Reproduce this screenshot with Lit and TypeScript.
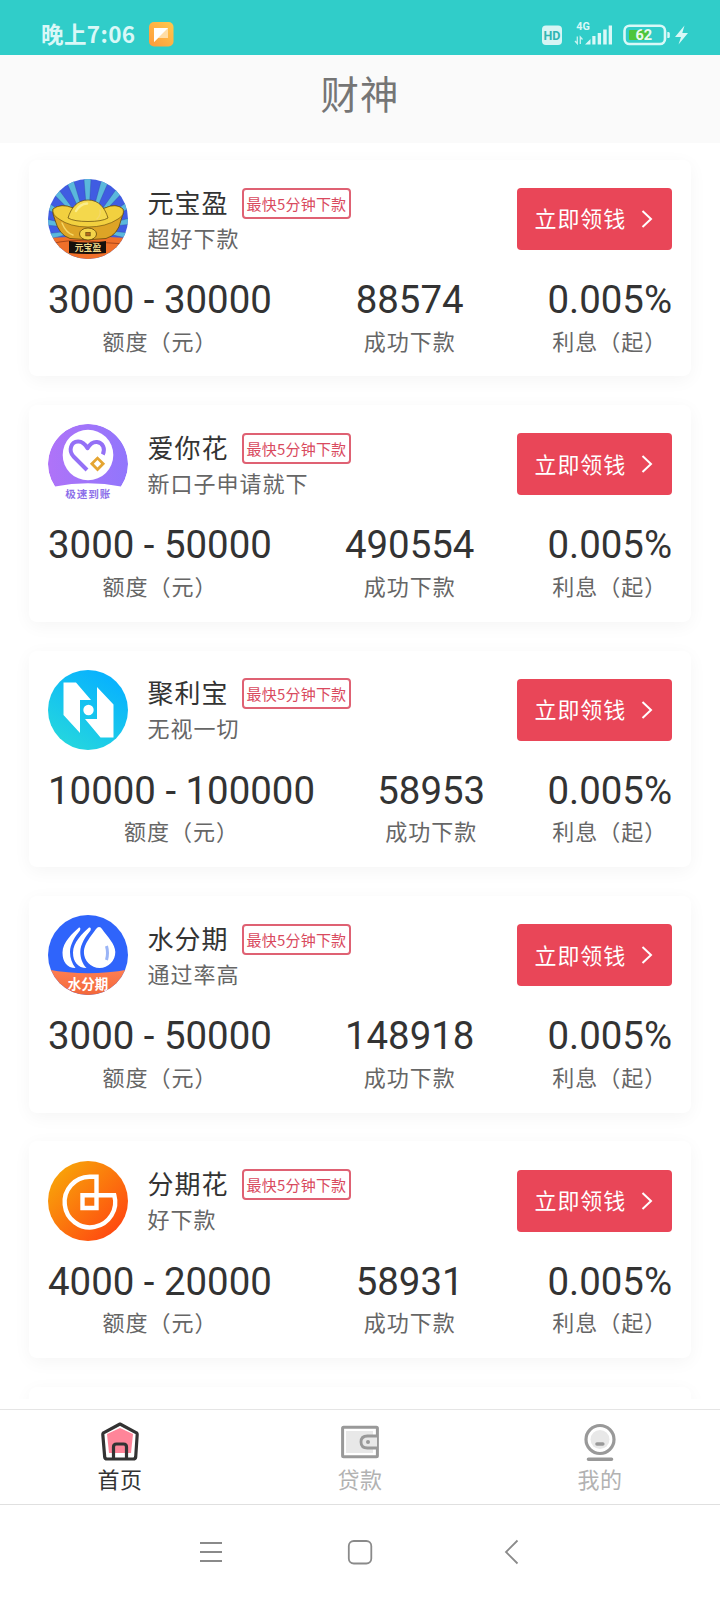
/**
 * Loan product list screen (Lit + TypeScript)
 *
 * @element app-root
 */

import { LitElement, html, css, svg, nothing } from 'lit';
import type { TemplateResult } from 'lit';
import { customElement, property } from 'lit/decorators.js';
import { classMap } from 'lit/directives/class-map.js';

type LogoName = 'ingot' | 'heart' | 'blocks' | 'drops' | 'spiral';

interface Product {
  name: string;
  slogan: string;
  logo: LogoName;
  range: string;
  count: string;
  rate: string;
}

const PRODUCTS: Product[] = [
  { name: '元宝盈', slogan: '超好下款', logo: 'ingot', range: '3000 - 30000', count: '88574', rate: '0.005%' },
  { name: '爱你花', slogan: '新口子申请就下', logo: 'heart', range: '3000 - 50000', count: '490554', rate: '0.005%' },
  { name: '聚利宝', slogan: '无视一切', logo: 'blocks', range: '10000 - 100000', count: '58953', rate: '0.005%' },
  { name: '水分期', slogan: '通过率高', logo: 'drops', range: '3000 - 50000', count: '148918', rate: '0.005%' },
  { name: '分期花', slogan: '好下款', logo: 'spiral', range: '4000 - 20000', count: '58931', rate: '0.005%' },
];

/* Rays behind the ingot, as wedges from the centre */
const RAY_COUNT = 18;
const rays = Array.from({ length: RAY_COUNT }, (_, i) => {
  const a = (i * 2 * Math.PI) / RAY_COUNT - Math.PI / 2 - 0.08;
  const b = a + 0.14;
  const p = (t: number) => `${(40 + 72 * Math.cos(t)).toFixed(1)} ${(50 + 72 * Math.sin(t)).toFixed(1)}`;
  return `M40 50L${p(a)}L${p(b)}Z`;
}).join('');

const LOGOS: Record<LogoName, TemplateResult> = {
  ingot: svg`
    <rect width="80" height="80" fill="#405ce2" />
    <path d=${rays} fill="#5ab8dc" stroke="#2c3f8f" stroke-width=".3" />
    <path d="M0 59Q40 56 80 59V80H0Z" fill="#f0702a" />
    <path d="M2 65Q22 60 40 62T78 65" fill="none" stroke="#8d3512" stroke-width=".7" />
    <path d="M5 30Q13 24 25 29Q40 40 57 29Q68 24 75 30Q76 34 73 41Q70 56 58 59.500Q40 62 22 59.500Q11 56 7 41Q4 34 5 30Z" fill="#dda426" stroke="#5f450c" stroke-width=".8" />
    <path d="M5 30Q13 24 25 29Q40 36 57 29Q68 24 75 30Q77 36 70 40Q58 48 40 48Q22 48 11 40Q4 36 5 30Z" fill="#f2d03f" stroke="#5f450c" stroke-width=".6" />
    <path d="M20 39C23 29 29 21 40 21S57 29 60 39Q54 42.500 40 42.500T20 39Z" fill="#f4d84c" stroke="#5f450c" stroke-width=".7" />
    <path d="M28 32Q32 25 39 24.500" fill="none" stroke="#faec8c" stroke-width="2.500" stroke-linecap="round" />
    <path d="M52 31Q53 36 49 40M14 44Q18 54 25 56" fill="none" stroke="#f5d868" stroke-width="1.400" stroke-linecap="round" />
    <ellipse cx="40" cy="55" rx="8.500" ry="6" fill="#f4d44a" stroke="#5f450c" stroke-width=".8" />
    <rect x="37.800" y="53.300" width="4.400" height="3.600" fill="#b5691b" stroke="#5f450c" stroke-width=".6" />
    <path d="M21 62Q40 65 58 62V74Q40 76 21 74Z" fill="#16100c" />
    <text x="40" y="72.200" font-size="8.800" font-weight="700" text-anchor="middle" fill="#f0d98a">元宝盈</text>
  `,
  heart: svg`
    <defs>
      <linearGradient id="heart-bg" x1="0" y1="0" x2="1" y2="0">
        <stop offset="0" stop-color="#af73f8" />
        <stop offset="1" stop-color="#9176fc" />
      </linearGradient>
    </defs>
    <path d="M7 62.500A40 40 0 1 1 73 62.500Q40 56 7 62.500Z" fill="url(#heart-bg)" />
    <circle cx="40" cy="31" r="25.300" fill="#fff" />
    <path d="M39 46L25.500 32.500C20 26 23 18 30 17.600C34 17.400 37 20 39.500 24.200C42 20 45 17.600 49 18C55 18.600 57.500 25 54.800 30.500" fill="none" stroke="#9470f6" stroke-width="4" stroke-linejoin="round" />
    <rect x="45.500" y="35.800" width="8" height="8" transform="rotate(45 49.5 39.8)" fill="#fff" stroke="#e5a532" stroke-width="2.800" />
    <text x="40.300" y="73.500" font-size="10.600" font-weight="700" letter-spacing=".9" text-anchor="middle" fill="#8d70ea">极速到账</text>
  `,
  blocks: svg`
    <defs>
      <linearGradient id="blocks-bg" x1=".8" y1="0" x2=".2" y2="1">
        <stop offset=".1" stop-color="#09b3fd" />
        <stop offset="1" stop-color="#26d8dd" />
      </linearGradient>
    </defs>
    <rect width="80" height="80" fill="url(#blocks-bg)" />
    <path d="M15.500 12.500H28L43 30H32V63L15.500 45Z" fill="#fff" />
    <path d="M49 17L65.500 34.500V67.500H52.500L37 49H49Z" fill="#fff" />
    <circle cx="40.500" cy="40" r="5.200" fill="#fff" />
  `,
  drops: svg`
    <defs>
      <linearGradient id="drops-foot" x1="0" y1="0" x2="0" y2="1">
        <stop offset="0" stop-color="#ff7f52" />
        <stop offset="1" stop-color="#f2673a" />
      </linearGradient>
    </defs>
    <rect width="80" height="80" fill="#2f64fb" />
    <path d="M0 54.500Q40 62 80 54.500V80H0Z" fill="url(#drops-foot)" />
    <path d="M51 12Q53 12 54 14C59 21 67.300 29 67.300 37A15.700 16 0 0 1 35.900 37C35.900 29 43 21 48 14Q49.500 12 51 12Z" fill="#fff" />
    <path d="M31 12.500C25 18 14.500 27 14.500 37.500C14.500 47 19 53 27.500 53C24 48.500 22 43 22 37C22 29 27.500 21 32 15.500Q33 12 31 12.500Z" fill="#fff" />
    <path d="M41 12.500C35 18 25 27 25 37.500C25 47 30 53 38.500 53C34.500 49 32.300 43 32.300 37C32.300 29 38 21 42.500 15.500Q43.500 12 41 12.500Z" fill="#fff" />
    <path d="M58.500 31Q60.500 38 58.500 45" fill="none" stroke="#9ab4f6" stroke-width="3" />
    <text x="40" y="74.300" font-size="13.500" font-weight="700" text-anchor="middle" fill="#fff">水分期</text>
  `,
  spiral: svg`
    <defs>
      <linearGradient id="spiral-bg" x1=".1" y1=".1" x2=".9" y2=".9">
        <stop offset="0" stop-color="#f8a509" />
        <stop offset="1" stop-color="#ff4611" />
      </linearGradient>
    </defs>
    <rect width="80" height="80" fill="url(#spiral-bg)" />
    <path d="M48.500 47V15.800H41.500A25.300 25.300 0 1 0 66.300 34.300H34.500V47Z" fill="none" stroke="#fff" stroke-width="4.400" />
  `,
};

const TAB_ICONS: Record<string, TemplateResult> = {
  home: svg`
    <path d="M7 13L20 7L33 13L31 32H9Z" fill="#ff8599" />
    <path d="M20 3L36.500 11.800Q37.300 12.500 37.200 13.500L35.700 36Q35.500 38 33 38H7.200Q4.900 38 4.700 36L2.800 13.500Q2.700 12.500 3.500 11.800Z" fill="none" stroke="#333" stroke-width="3.200" stroke-linejoin="round" />
    <path d="M13.500 37.500V26Q13.500 23 16.500 23H23.500Q26.500 23 26.500 26V37.500" fill="none" stroke="#333" stroke-width="3.200" />
  `,
  wallet: svg`
    <rect x="6" y="10" width="27" height="22" fill="#e8e8e8" />
    <rect x="2.600" y="6.200" width="34.800" height="29.600" rx="1" fill="none" stroke="#999" stroke-width="3" />
    <path d="M37 15H27.500Q21 15 21 21T27.500 27H37" fill="#e8e8e8" stroke="#999" stroke-width="2.800" />
    <circle cx="28" cy="21" r="2" fill="#999" />
  `,
  mine: svg`
    <circle cx="20" cy="18.500" r="9.500" fill="#e8e8e8" />
    <circle cx="20" cy="18.500" r="14" fill="none" stroke="#999" stroke-width="3.200" />
    <path d="M17 23H22.800M8.500 38.200H31.500" stroke="#999" stroke-width="3.600" stroke-linecap="round" />
  `,
};

@customElement('loan-status-bar')
export class LoanStatusBar extends LitElement {
  static override styles = css`
    :host {
      box-sizing: border-box;
      display: flex;
      align-items: center;
      height: 55px;
      padding: 13px 32px 0 41px;
      background: #30cdc9;
      color: #d9f8f7;
    }

    .time {
      height: 30px;
      font: 700 22.5px/29px 'Noto Sans CJK SC', sans-serif;
      letter-spacing: 0.4px;
    }

    .app {
      width: 25px;
      height: 25px;
      margin-left: 13px;
    }

    .signals {
      width: 148px;
      height: 30px;
      margin-left: auto;
    }
  `;

  override render() {
    return html`
      <span class="time">晚上7:06</span>
      <svg class="app" viewBox="0 0 25 25">
        <defs>
          <linearGradient id="app-bg" x1="0" y1="1" x2="1" y2="0">
            <stop offset="0" stop-color="#ff9a3c" />
            <stop offset="1" stop-color="#ffc94c" />
          </linearGradient>
        </defs>
        <rect width="24.500" height="24.500" rx="5" fill="url(#app-bg)" />
        <path d="M5 6H19V16H9L5 20Z" fill="#ffdda6" />
        <path d="M5 6H19L5 20Z" fill="#fff" />
      </svg>
      <svg class="signals" viewBox="540 19 148 30" font-family="Roboto, sans-serif" font-weight="700">
        <rect x="542" y="25.500" width="20" height="19.500" rx="4" fill="#d6f5f4" />
        <text x="552" y="39.900" font-size="12.500" text-anchor="middle" fill="#30b5b2">HD</text>
        <text x="576.300" y="30.300" font-size="10.800" fill="#d9f8f7">4G</text>
        <path d="M577.300 36.500V43.500L575 41M580.300 44V37L582.500 39.500" fill="none" stroke="#c9f3f1" stroke-width="1.300" />
        <path d="M585 44.500L590.500 39V44.500ZM592.300 36H595.500V44.500H592.300ZM597.700 33H601V44.500H597.700ZM603.200 29.500H606.700V44.500H603.200ZM608.700 25.500H612V44.500H608.700Z" fill="#d9f8f7" />
        <rect x="624.500" y="25.800" width="40.500" height="18.200" rx="5" fill="none" stroke="#d9f8f7" stroke-width="2.600" />
        <rect x="629" y="30" width="20" height="10" rx="1" fill="#4fc53c" />
        <path d="M667.300 32H668.500Q669.800 32 669.800 33.500V36.500Q669.800 38 668.500 38H667.300Z" fill="#d9f8f7" />
        <text x="643.700" y="40" font-size="14.500" text-anchor="middle" fill="#e9fbf0">62</text>
        <path d="M684.500 25.500L675 37H681L678.500 44.500L688 33H682.300Z" fill="#d9f8f7" />
      </svg>
    `;
  }
}

@customElement('loan-card')
export class LoanCard extends LitElement {
  static override styles = css`
    :host {
      box-sizing: border-box;
      display: block;
      flex: none;
      height: 216.6px;
      padding: 19.2px;
      border-radius: 8px;
      background: #fff;
      box-shadow: 0 4px 18px rgba(0, 0, 0, 0.045);
      color: #333;
    }

    .head {
      display: flex;
      height: 80px;
    }

    .logo {
      flex: none;
      width: 80px;
      height: 80px;
      border-radius: 50%;
    }

    .info {
      flex: 1;
      padding: 8.6px 0 0 19.6px;
    }

    .title {
      display: flex;
      align-items: flex-start;
      height: 34px;
    }

    .name {
      font-size: 26px;
      line-height: 28px;
      letter-spacing: 1px;
    }

    .tag {
      box-sizing: border-box;
      height: 31px;
      margin-left: 13px;
      padding: 0 2.5px 0 3px;
      border: 2px solid #df6173;
      border-radius: 4px;
      color: #d94a5e;
      font-size: 15px;
      letter-spacing: 0.2px;
      line-height: 27px;
    }

    .slogan {
      color: #666;
      font-size: 22px;
      line-height: 30px;
      letter-spacing: 1px;
    }

    .apply {
      appearance: none;
      box-sizing: border-box;
      display: flex;
      align-items: center;
      align-self: center;
      width: 155px;
      height: 62px;
      margin: 0;
      padding: 0 18px 0 17.5px;
      border: none;
      border-radius: 4px;
      background: #e94658;
      color: #fff;
      font: inherit;
      font-size: 22px;
      letter-spacing: 0.9px;
      white-space: nowrap;
    }

    .apply span {
      padding-bottom: 3px;
    }

    .apply svg {
      width: 12px;
      height: 20px;
      margin-left: 15px;
    }

    .stats {
      display: flex;
      justify-content: space-between;
      margin-top: 18px;
      text-align: center;
    }

    .value {
      font-family: Roboto, sans-serif;
      font-size: 38.4px;
      line-height: 45px;
    }

    .label {
      margin-top: 4.6px;
      color: #666;
      font-size: 22px;
      line-height: 26px;
      letter-spacing: 1px;
    }
  `;

  @property({ attribute: false })
  product?: Product;

  private _renderStat(value: string, label: string) {
    return html`
      <div class="stat">
        <div class="value">${value}</div>
        <div class="label">${label}</div>
      </div>
    `;
  }

  override render() {
    if (!this.product) return nothing;
    const { name, slogan, logo, range, count, rate } = this.product;
    return html`
      <div class="head">
        <svg class="logo" viewBox="0 0 80 80">${LOGOS[logo]}</svg>
        <div class="info">
          <div class="title">
            <span class="name">${name}</span>
            <span class="tag">最快5分钟下款</span>
          </div>
          <div class="slogan">${slogan}</div>
        </div>
        <button class="apply" type="button">
          <span>立即领钱</span>
          <svg viewBox="0 0 12 20">
            <path d="M1.500 2L10 10L1.500 18" fill="none" stroke="#fff" stroke-width="2" />
          </svg>
        </button>
      </div>
      <div class="stats">
        ${this._renderStat(range, '额度（元）')}
        ${this._renderStat(count, '成功下款')}
        ${this._renderStat(rate, '利息（起）')}
      </div>
    `;
  }
}

@customElement('loan-tab')
export class LoanTab extends LitElement {
  static override styles = css`
    :host {
      display: block;
      flex: 1;
    }

    .tab {
      display: flex;
      flex-direction: column;
      align-items: center;
      padding-top: 11px;
      color: #b2b2b2;
      font-size: 22px;
      line-height: 30px;
      letter-spacing: 0.6px;
    }

    .tab.active {
      color: #333;
    }

    .tab svg {
      width: 40px;
      height: 42px;
    }
  `;

  @property({ type: String })
  icon = 'home';

  @property({ type: String })
  label = '';

  @property({ type: Boolean, reflect: true })
  active = false;

  override render() {
    return html`
      <div class=${classMap({ tab: true, active: this.active })}>
        <svg viewBox="0 0 40 42">${TAB_ICONS[this.icon]}</svg>
        <span>${this.label}</span>
      </div>
    `;
  }
}

@customElement('app-root')
export class AppRoot extends LitElement {
  static override styles = css`
    :host {
      display: flex;
      flex-direction: column;
      width: 720px;
      height: 1600px;
      overflow: hidden;
      background: #fff;
      font-family: 'Noto Sans CJK SC', sans-serif;
    }

    .header {
      flex: none;
      height: 88px;
      background: #fafafa;
      color: #757575;
      font-size: 38.4px;
      line-height: 75px;
      letter-spacing: 1px;
      text-align: center;
    }

    .list {
      box-sizing: border-box;
      display: flex;
      flex-direction: column;
      gap: 28.8px;
      height: 1256px;
      padding: 16.8px 28.8px 0;
      overflow: hidden;
    }

    .tabs {
      box-sizing: border-box;
      display: flex;
      height: 96px;
      margin-top: 10px;
      border-top: 1px solid #e5e5e5;
      border-bottom: 1px solid #e0e0e0;
    }

    .system {
      display: flex;
      flex: 1;
      align-items: center;
      justify-content: center;
      padding-bottom: 2px;
    }

    .system svg {
      width: 320px;
      height: 28px;
    }
  `;

  override render() {
    return html`
      <loan-status-bar></loan-status-bar>
      <div class="header">财神</div>
      <main class="list">
        ${PRODUCTS.map((product) => html`<loan-card .product=${product}></loan-card>`)}
        <loan-card></loan-card>
      </main>
      <nav class="tabs">
        <loan-tab icon="home" label="首页" active></loan-tab>
        <loan-tab icon="wallet" label="贷款"></loan-tab>
        <loan-tab icon="mine" label="我的"></loan-tab>
      </nav>
      <div class="system">
        <svg viewBox="200 0 320 28" fill="none" stroke="#8a8a8a" stroke-width="1.800">
          <path d="M200 5H222M200 14H222M200 23H222" />
          <rect x="348.800" y="3" width="22.500" height="22.500" rx="5" />
          <path d="M517.500 2.500L506 14L517.500 25.500" />
        </svg>
      </div>
    `;
  }
}
